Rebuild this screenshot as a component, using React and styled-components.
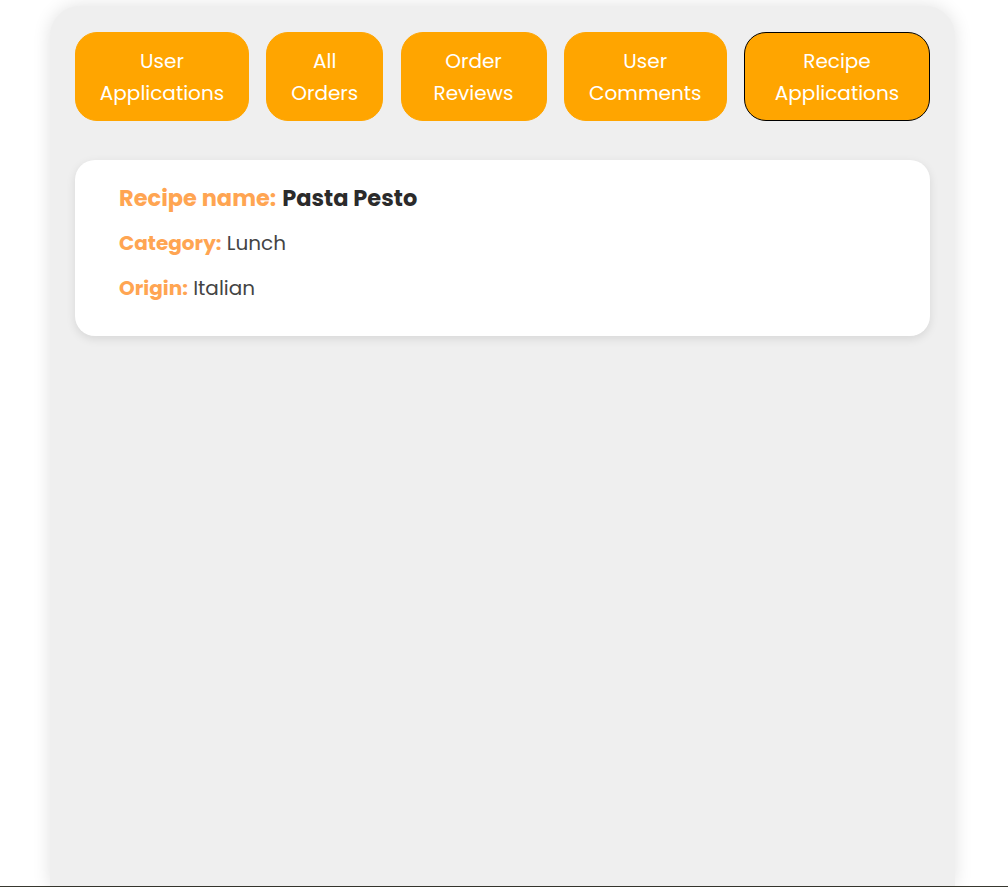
import React from 'react';
import styled, { createGlobalStyle } from 'styled-components';

const GlobalStyle = createGlobalStyle`
  body {
    margin: 0;
    background: #fff;
    font-family: "Poppins", "Inter", "Noto Sans", sans-serif;
  }
`;

const Page = styled.div`
  display: flex;
  flex-direction: column;
  align-items: flex-start;
  padding: 6px 0 0 50px;
`;

const Panel = styled.main`
  box-sizing: border-box;
  width: 905px;
  min-height: 880px;
  padding: 26px 25px;
  background: #efefef;
  border-radius: 30px 30px 0 0;
  box-shadow: 0 0 18px rgba(0, 0, 0, 0.12);
`;

const Tabs = styled.nav`
  display: flex;
  justify-content: space-between;
`;

const Tab = styled.button`
  box-sizing: border-box;
  width: ${(p) => p.$w}px;
  height: 89px;
  padding: 0;
  border: 1px solid ${(p) => (p.$active ? '#000' : '#ffa500')};
  border-radius: 22px;
  background: #ffa500;
  color: #fff;
  font-family: inherit;
  font-size: 20px;
  line-height: 32px;
  cursor: pointer;
`;

const Card = styled.section`
  display: flex;
  flex-direction: column;
  gap: 15px;
  margin-top: 39px;
  padding: 23px 44px 33px;
  background: #fff;
  border-radius: 20px;
  box-shadow: 0 3px 10px rgba(0, 0, 0, 0.1);
`;

const Line = styled.div`
  line-height: 30px;
  font-size: ${(p) => (p.$title ? 22.5 : 20)}px;
  color: #444;
`;

const Label = styled.span`
  font-weight: 700;
  color: #ffa552;
`;

const Value = styled.span`
  font-weight: ${(p) => (p.$bold ? 700 : 400)};
  color: ${(p) => (p.$bold ? '#2b2b2b' : '#444')};
`;

const Footer = styled.footer`
  height: 60px;
  background: #38382f;
`;

const tabs = [
  { top: 'User', bottom: 'Applications', w: 174 },
  { top: 'All', bottom: 'Orders', w: 117 },
  { top: 'Order', bottom: 'Reviews', w: 146 },
  { top: 'User', bottom: 'Comments', w: 163 },
  { top: 'Recipe', bottom: 'Applications', w: 186, active: true },
];

const App = () => {
  return (
    <>
      <GlobalStyle />
      <Page>
        <Panel>
          <Tabs>
            {tabs.map((t) => (
              <Tab key={t.top + t.bottom} $w={t.w} $active={t.active}>
                {t.top}
                <br />
                {t.bottom}
              </Tab>
            ))}
          </Tabs>
          <Card>
            <Line $title>
              <Label>Recipe name:</Label> <Value $bold>Pasta Pesto</Value>
            </Line>
            <Line>
              <Label>Category:</Label> <Value>Lunch</Value>
            </Line>
            <Line>
              <Label>Origin:</Label> <Value>Italian</Value>
            </Line>
          </Card>
        </Panel>
      </Page>
      <Footer />
    </>
  );
};

export default App;
